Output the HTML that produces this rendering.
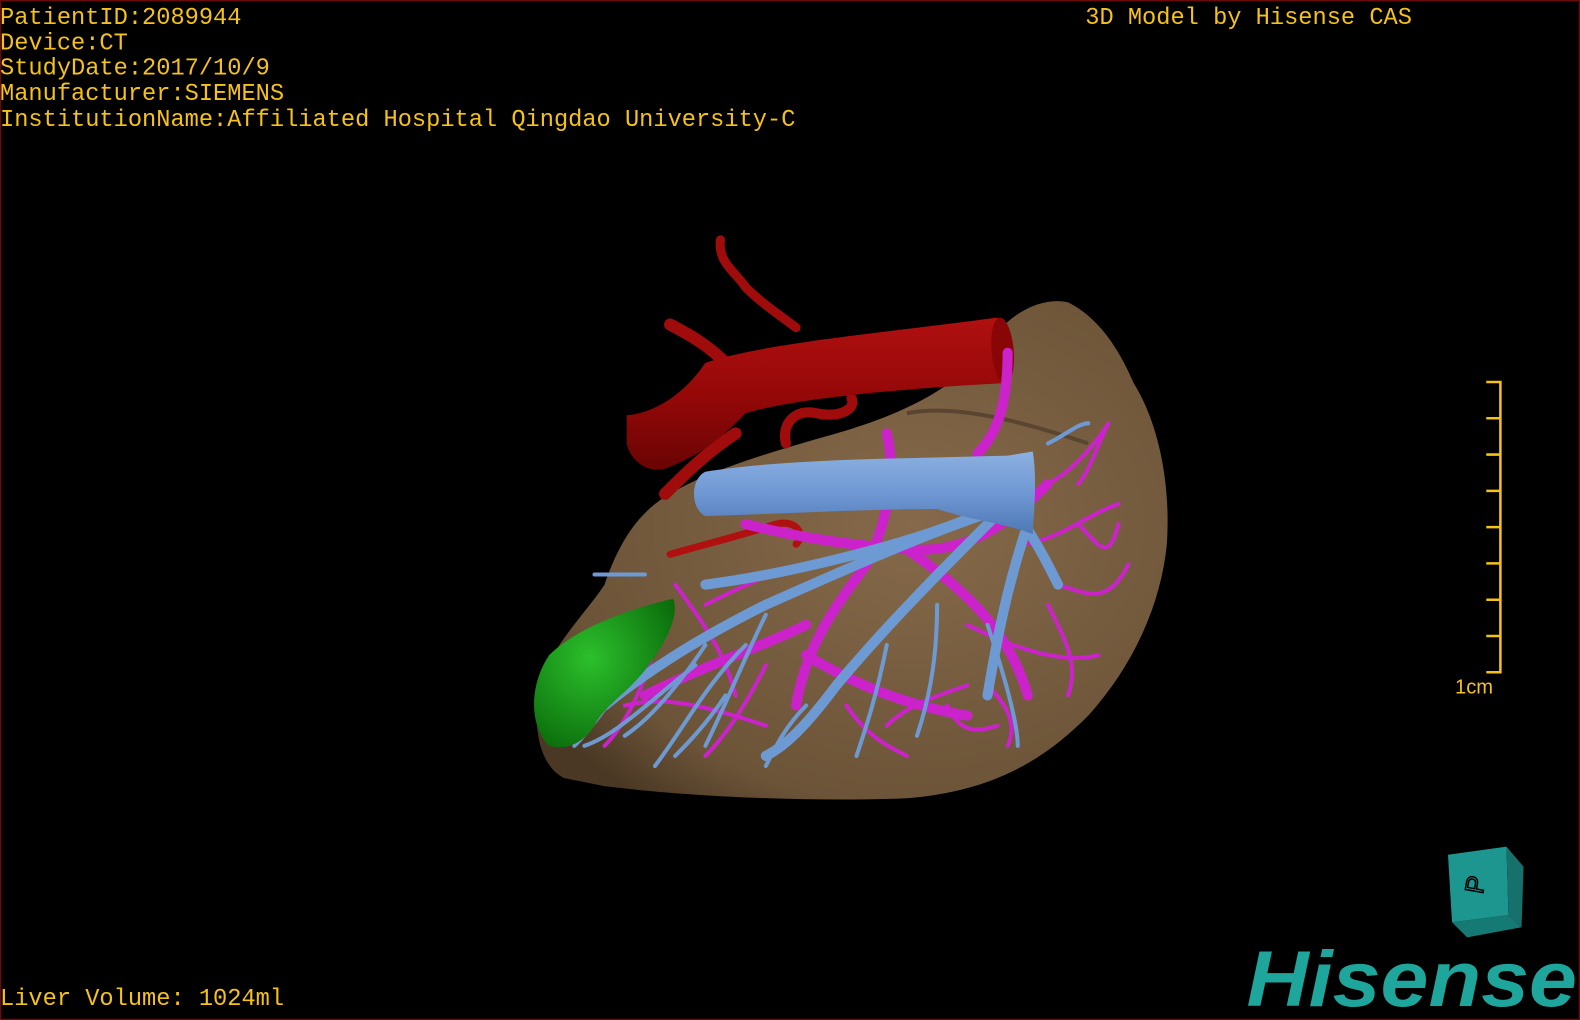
<!DOCTYPE html>
<html><head><meta charset="utf-8"><style>
html,body{margin:0;padding:0;background:#000;width:1580px;height:1020px;overflow:hidden}
svg{display:block}
</style></head><body>
<svg width="1580" height="1020" viewBox="0 0 1568 1012" preserveAspectRatio="none" xmlns="http://www.w3.org/2000/svg">
<defs>
<radialGradient id="lv" cx="0.6" cy="0.45" r="0.7">
<stop offset="0" stop-color="#86694a"/><stop offset="0.8" stop-color="#6c5438"/><stop offset="1" stop-color="#4a3824"/>
</radialGradient>
<linearGradient id="ao" x1="0" y1="0" x2="0" y2="1">
<stop offset="0" stop-color="#b01010"/><stop offset="0.5" stop-color="#960808"/><stop offset="1" stop-color="#6a0404"/>
</linearGradient>
<linearGradient id="vc" x1="0" y1="0" x2="0" y2="1">
<stop offset="0" stop-color="#8cb0e0"/><stop offset="0.5" stop-color="#6f98d4"/><stop offset="1" stop-color="#4e78b4"/>
</linearGradient>
<radialGradient id="gb" cx="0.4" cy="0.4" r="0.7">
<stop offset="0" stop-color="#2cc02c"/><stop offset="1" stop-color="#0a6a0a"/>
</radialGradient>
</defs>
<rect x="0.5" y="0.5" width="1567" height="1011" fill="#000" stroke="#6a0a0a" stroke-width="1.5"/>
<!-- liver -->
<path d="M560,772 C535,760 528,720 535,680 C548,640 580,610 600,580 C610,550 625,520 650,500 C690,470 760,450 830,430 C900,410 960,380 990,330 C1010,305 1040,295 1060,300 C1090,315 1110,345 1125,380 C1150,420 1162,480 1158,540 C1152,600 1125,660 1080,710 C1040,750 990,785 900,792 C800,796 680,790 600,780 Z" fill="url(#lv)"/>
<path d="M900,410 C950,400 1020,420 1080,440" stroke="#5a4530" stroke-width="4" fill="none"/>
<!-- aorta -->
<g fill="none" stroke="#a00c0c" stroke-linecap="round">
<path d="M715,238 C712,260 730,270 740,285 C755,300 770,310 790,325" stroke-width="9"/>
<path d="M665,322 C690,335 705,345 720,360" stroke-width="12"/>
<path d="M780,440 C775,420 790,405 810,410 C835,415 850,405 845,395" stroke-width="10"/>
<path d="M730,430 C700,450 680,470 660,490" stroke-width="12"/>
<path d="M665,550 C700,540 740,530 770,520 C790,515 800,530 790,540" stroke="#b01010" stroke-width="7"/>
</g>
<path d="M700,360 C760,340 880,330 990,315 L1000,380 C900,385 790,395 740,410 C720,430 700,450 660,465 C640,470 625,455 622,440 L622,412 C650,410 680,390 700,360 Z" fill="url(#ao)"/>
<ellipse cx="995" cy="348" rx="11" ry="33" fill="#8a0606" transform="rotate(-5 995 348)"/>
<!-- magenta portal vein -->
<g fill="none" stroke="#cc22cc" stroke-linecap="round">
<path d="M880,430 C890,470 880,520 860,560 C830,600 800,640 790,700 M740,520 C780,530 830,540 900,545 C960,550 1000,520 1040,480 M1000,350 C1000,400 990,430 970,450 M800,620 C760,640 700,660 640,690 M800,650 C850,680 900,700 960,710 M900,545 C950,580 1000,620 1020,690" stroke-width="10"/>
<path d="M1040,480 C1060,470 1080,450 1100,420 M1020,540 C1060,530 1080,510 1110,500 M960,620 C1000,640 1050,660 1090,650 M700,600 C740,580 780,560 820,560 M620,700 C660,690 700,700 760,720 M840,700 C860,730 880,740 900,750 M980,680 C1000,700 1010,720 1000,740 M760,660 C740,700 720,730 700,750 M670,580 C700,620 720,650 730,690 M1050,580 C1080,590 1100,600 1120,560 M650,640 C640,680 620,720 600,740 M880,720 C900,700 930,690 960,680 M1070,520 C1090,540 1100,560 1110,520 M1040,600 C1060,640 1070,660 1060,690 M940,700 C950,720 960,730 990,720 M1100,420 C1090,440 1080,470 1070,480" stroke-width="4"/>
</g>
<!-- blue hepatic veins -->
<g fill="none" stroke="#6e9ad4" stroke-linecap="round">
<path d="M1010,500 C940,520 850,560 760,600 C700,630 650,660 600,700 M990,510 C940,560 880,620 830,680 C800,720 780,740 760,750 M1020,520 C1000,580 990,630 980,690 M1010,510 C1030,540 1040,560 1050,580 M960,515 C900,540 780,570 700,580" stroke-width="10"/>
<path d="M700,640 C680,670 650,710 620,730 M760,610 C740,650 720,700 700,740 M740,640 C700,680 680,720 650,760 M880,640 C870,690 860,720 850,750 M930,600 C930,660 920,700 910,730 M660,620 C620,640 600,660 570,680 M690,660 C640,700 610,730 580,740 M980,620 C1000,680 1010,720 1010,740 M640,570 C620,570 600,570 590,570 M800,700 C780,720 770,740 760,760 M1040,440 C1060,430 1070,420 1080,420 M720,690 C700,720 680,740 670,750 M620,680 C600,700 590,720 570,740" stroke-width="4"/>
</g>
<path d="M700,468 C780,455 900,455 1000,452 L1025,448 C1030,480 1025,515 1025,530 C1000,520 960,515 930,505 C860,505 770,510 700,512 C685,505 685,475 700,468 Z" fill="url(#vc)"/>
<!-- gallbladder -->
<path d="M545,740 C525,720 525,680 545,650 C570,625 620,605 668,594 C675,610 660,640 640,665 C620,690 600,700 590,720 C580,735 565,745 545,740 Z" fill="url(#gb)"/>
<!-- text -->
<g font-family="'Liberation Mono',monospace" font-size="23.5" fill="#f5c218">
<text x="0" y="24">PatientID:2089944</text>
<text x="0" y="49">Device:CT</text>
<text x="0" y="74">StudyDate:2017/10/9</text>
<text x="0" y="99">Manufacturer:SIEMENS</text>
<text x="0" y="125">InstitutionName:Affiliated Hospital Qingdao University-C</text>
<text x="1077" y="24">3D Model by Hisense CAS</text>
<text x="0" y="997">Liver Volume: 1024ml</text>
</g>
<!-- scale -->
<g stroke="#f5c218" stroke-width="2.5" fill="none">
<path d="M1475,379 H1489 V667 H1475 M1475,415 H1489 M1475,451 H1489 M1475,487 H1489 M1475,523 H1489 M1475,559 H1489 M1475,595 H1489 M1475,631 H1489"/>
</g>
<text x="1444" y="688" font-family="'Liberation Sans',sans-serif" font-size="20" fill="#f5c218">1cm</text>
<!-- cube -->
<polygon points="1437,848 1495,840 1497,908 1441,915" fill="#1e9690"/>
<polygon points="1495,840 1512,860 1510,920 1497,908" fill="#16706c"/>
<polygon points="1441,915 1497,908 1510,920 1456,930" fill="#157a74"/>
<text x="1466" y="885" font-family="'Liberation Sans',sans-serif" font-size="26" fill="none" stroke="#000" stroke-width="1.5" transform="rotate(-80 1466 878)" text-anchor="middle">P</text>
<!-- logo -->
<text x="1237" y="998" font-family="'Liberation Sans',sans-serif" font-weight="bold" font-style="italic" font-size="78" fill="#1ea59c" textLength="328" lengthAdjust="spacingAndGlyphs">Hisense</text>
</svg>
</body></html>
